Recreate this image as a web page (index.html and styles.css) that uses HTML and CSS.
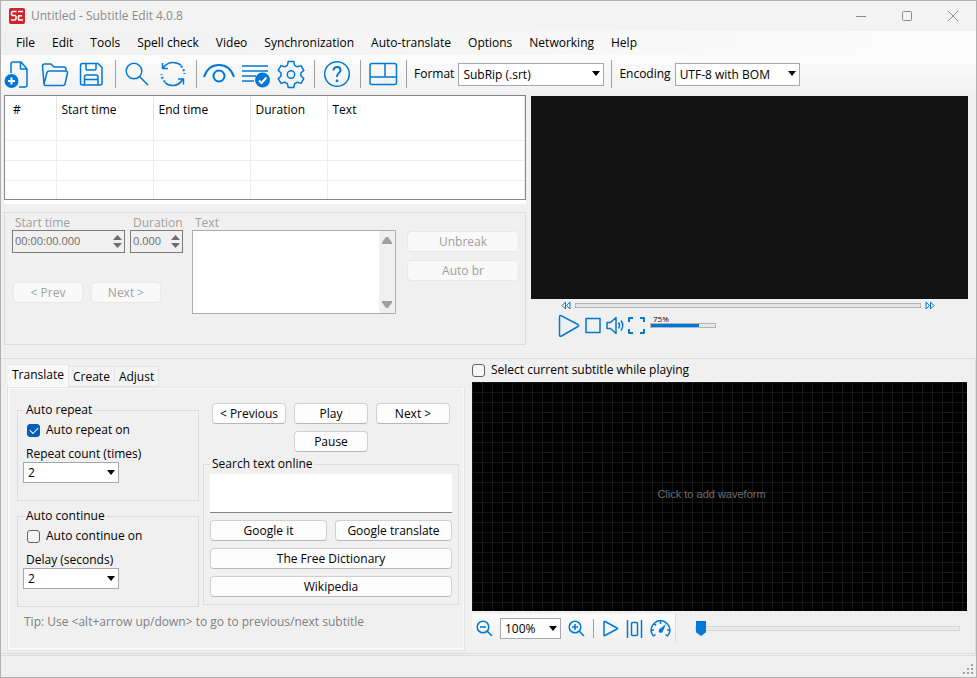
FILE: index.html
```
<!DOCTYPE html>
<html lang="en">
<head>
    <meta charset="utf-8">
    <title>Untitled - Subtitle Edit 4.0.8</title>
    <link rel="stylesheet" href="styles.css">
</head>
<body>
    <header class="titlebar">
        <svg class="logo" width="16" height="16" viewBox="0 0 16 16">
            <rect width="16" height="16" rx="2" fill="#d3222a"/>
            <path d="M7.5 3.5H3.5L2.5 4.5V6.5L3.5 7.5H6L7 8.5V11L6 12H2M9 3.5H14M9 7.8H13M9 12H14M9.5 8V12" fill="none" stroke="#fff" stroke-width="1.6"/>
        </svg>
        <h1 class="title">Untitled - Subtitle Edit 4.0.8</h1>
        <div class="window-buttons">
            <button aria-label="Minimize"><svg width="12" height="12"><path d="M1 6.5h10"/></svg></button>
            <button aria-label="Maximize"><svg width="12" height="12"><rect x="1.5" y="1.5" width="9" height="9" rx="1"/></svg></button>
            <button aria-label="Close"><svg width="12" height="12"><path d="M1 1l10 10M11 1L1 11"/></svg></button>
        </div>
    </header>

    <nav class="menu">
        <a href="#">File</a>
        <a href="#">Edit</a>
        <a href="#">Tools</a>
        <a href="#">Spell check</a>
        <a href="#">Video</a>
        <a href="#">Synchronization</a>
        <a href="#">Auto-translate</a>
        <a href="#">Options</a>
        <a href="#">Networking</a>
        <a href="#">Help</a>
    </nav>

    <div class="toolbar">
        <button class="tool" aria-label="New">
            <svg class="icon" width="31" height="30"><path d="M7 14V5q0-2 2-2h8l6 7v16q0 2-2 2h-6M16.500 3.500V10H23"/><circle class="fill" cx="7.500" cy="22" r="7"/><path class="white" d="M7.500 18.500v7M4 22h7"/></svg>
        </button>
        <button class="tool" aria-label="Open">
            <svg class="icon" width="31" height="30"><path d="M3 25L1.500 7q0-2 2-2H10l3 3h10q2 0 2 2v2M3 25L6 13.500q.5-1.500 2-1.500h16.500q2 0 2 2L24 25q-.3 1.500-2 1.500H4.500Q3 26.500 3 25z"/></svg>
        </button>
        <button class="tool" aria-label="Save">
            <svg class="icon" width="31" height="30"><path d="M4.500 4.500H20l4 4V24q0 2-2 2H4.500q-2 0-2-2V6.500q0-2 2-2zM8 4.500V10q0 1 1 1h8q1 0 1-1V4.500M6.500 26v-8q0-2 2-2H18q2 0 2 2v8M6.500 20.500H20"/></svg>
        </button>
        <span class="separator"></span>
        <button class="tool" aria-label="Find">
            <svg class="icon" width="31" height="30"><circle cx="12" cy="12" r="7.800"/><path d="M17.500 17.500L26 26"/></svg>
        </button>
        <button class="tool" aria-label="Replace">
            <svg class="icon" width="31" height="30"><path d="M4 9Q8 3.500 14 3.500q5 0 8 3M24 20q-4 6.500-10 6.500-5 0-8-3M3.500 4v5.500H9M24.500 25.500V20H19"/><path class="dots" d="M22 7q3 3 3.500 8M6 23q-3-3-3.500-8"/></svg>
        </button>
        <span class="separator"></span>
        <button class="tool" aria-label="Visual sync">
            <svg class="icon thick" width="31" height="30"><path d="M1 18Q5 6 16 6t15 12"/><circle cx="16" cy="17" r="5.500"/></svg>
        </button>
        <button class="tool" aria-label="Fix common errors">
            <svg class="icon" width="31" height="30"><path d="M2 7h26M2 12h26M2 17h14M2 22h12"/><circle class="fill" cx="22.500" cy="21" r="7.500"/><path class="white" d="M19 21.500l2.500 2.500 5-5.500"/></svg>
        </button>
        <button class="tool" aria-label="Settings">
            <svg class="icon" width="31" height="30"><path d="M11.200 2.500h5.600l.8 3.800 2.700 1.500 3.700-1.200 2.800 4.800-2.900 2.600v3l2.900 2.600-2.800 4.800-3.700-1.200-2.700 1.500-.8 3.800h-5.600l-.8-3.800-2.700-1.500L4 24.400l-2.800-4.800L4.100 17v-3l-2.900-2.600L4 6.600l3.700 1.200 2.700-1.500z"/><circle cx="14" cy="15.500" r="3.700"/></svg>
        </button>
        <span class="separator"></span>
        <button class="tool wide" aria-label="Help">
            <svg class="icon" width="31" height="30"><circle cx="15" cy="15" r="12.300"/><path class="thick" d="M11.500 11.500q0-3.500 3.500-3.500t3.500 3q0 2-1.800 3.200Q15 15.500 15 18"/><circle class="fill" cx="15" cy="21.800" r="1.400"/></svg>
        </button>
        <span class="separator"></span>
        <button class="tool wide" aria-label="Choose layout">
            <svg class="icon" width="31" height="30"><rect x="2" y="4.500" width="26.500" height="21" rx="2"/><path d="M2 18h26.500M17 4.500V18"/></svg>
        </button>
        <span class="separator"></span>
        <label class="tool-label" for="format">Format</label>
        <span class="combo format"><select id="format"><option>SubRip (.srt)</option></select></span>
        <span class="separator"></span>
        <label class="tool-label" for="encoding">Encoding</label>
        <span class="combo encoding"><select id="encoding"><option>UTF-8 with BOM</option></select></span>
    </div>

    <main class="main">
        <div class="top">
            <section class="editor">
                <div class="list">
                    <table>
                        <thead>
                            <tr><th class="col-number">#</th><th class="col-time">Start time</th><th class="col-time">End time</th><th class="col-duration">Duration</th><th>Text</th></tr>
                        </thead>
                        <tbody>
                            <tr><td></td><td></td><td></td><td></td><td></td></tr>
                            <tr><td></td><td></td><td></td><td></td><td></td></tr>
                            <tr><td></td><td></td><td></td><td></td><td></td></tr>
                            <tr><td></td><td></td><td></td><td></td><td></td></tr>
                        </tbody>
                    </table>
                </div>
                <div class="edit-box">
                    <div class="times">
                        <div class="time">
                            <label for="start">Start time</label>
                            <div class="spinner spinner-start">
                                <input id="start" type="text" value="00:00:00.000" disabled>
                                <svg width="9" height="15"><path d="M0 6L4.500 1 9 6zM0 9l4.500 5L9 9z"/></svg>
                            </div>
                        </div>
                        <div class="time">
                            <label for="duration">Duration</label>
                            <div class="spinner spinner-duration">
                                <input id="duration" type="text" value="0.000" disabled>
                                <svg width="9" height="15"><path d="M0 6L4.500 1 9 6zM0 9l4.500 5L9 9z"/></svg>
                            </div>
                        </div>
                        <div class="step">
                            <button class="button" disabled>&lt; Prev</button>
                            <button class="button" disabled>Next &gt;</button>
                        </div>
                    </div>
                    <div class="text-area">
                        <label for="text">Text</label>
                        <div class="text-frame">
                            <textarea id="text" disabled></textarea>
                            <div class="scrollbar">
                                <svg width="10" height="7"><path d="M0 7V5.500L4 0h2l4 5.500V7z"/></svg>
                                <svg width="10" height="7"><path d="M0 0v1.500L4 7h2l4-5.500V0z"/></svg>
                            </div>
                        </div>
                    </div>
                    <div class="break">
                        <button class="button" disabled>Unbreak</button>
                        <button class="button" disabled>Auto br</button>
                    </div>
                </div>
            </section>

            <section class="player">
                <div class="video"></div>
                <div class="seek">
                    <svg class="icon" width="10" height="9"><path d="M4.500 1v7L1 4.500zM9 1v7L5.500 4.500z"/></svg>
                    <input class="bar" type="range" value="0" aria-label="Position">
                    <svg class="icon" width="10" height="9"><path d="M1 1v7l3.500-3.500zM5.500 1v7L9 4.500z"/></svg>
                </div>
                <div class="playback">
                    <button aria-label="Play"><svg class="icon" width="22" height="24"><path d="M1.500 3q0-2 2-1.200L20 10.500q1.500 1 0 2L3.500 22q-2 1-2-1z"/></svg></button>
                    <button aria-label="Stop"><svg class="icon" width="16" height="24"><rect x="1" y="4.500" width="14" height="14"/></svg></button>
                    <button aria-label="Mute"><svg class="icon" width="18" height="24"><path d="M1 8.500h3.500L10 3.500v16l-5.500-5H1zM12.500 8.500q2 3 0 6M15 6.500q3.500 5 0 10"/></svg></button>
                    <button aria-label="Full screen"><svg class="icon thick" width="16" height="24"><path d="M0 8V4h4M11 4h4v4M15 15v4h-4M4 19H0v-4"/></svg></button>
                    <div class="volume">
                        <label for="volume">75%</label>
                        <input class="bar" id="volume" type="range" value="75">
                    </div>
                </div>
            </section>
        </div>

        <div class="bottom">
            <section class="tabs">
                <div class="tab-list">
                    <button class="tab active">Translate</button>
                    <button class="tab">Create</button>
                    <button class="tab">Adjust</button>
                </div>
                <div class="tab-page">
                    <div class="columns">
                        <div class="auto">
                            <fieldset>
                                <legend>Auto repeat</legend>
                                <label class="check"><input type="checkbox" checked> Auto repeat on</label>
                                <label class="field" for="repeat">Repeat count (times)</label>
                                <span class="combo count"><select id="repeat"><option>2</option></select></span>
                            </fieldset>
                            <fieldset>
                                <legend>Auto continue</legend>
                                <label class="check"><input type="checkbox"> Auto continue on</label>
                                <label class="field" for="delay">Delay (seconds)</label>
                                <span class="combo count"><select id="delay"><option>2</option></select></span>
                            </fieldset>
                        </div>
                        <div class="actions">
                            <div class="play-buttons">
                                <button class="button">&lt; Previous</button>
                                <button class="button">Play</button>
                                <button class="button">Next &gt;</button>
                                <button class="button pause">Pause</button>
                            </div>
                            <fieldset class="search">
                                <legend>Search text online</legend>
                                <textarea aria-label="Search text online"></textarea>
                                <div class="search-buttons">
                                    <button class="button">Google it</button>
                                    <button class="button">Google translate</button>
                                    <button class="button full">The Free Dictionary</button>
                                    <button class="button full">Wikipedia</button>
                                </div>
                            </fieldset>
                        </div>
                    </div>
                    <p class="tip">Tip: Use &lt;alt+arrow up/down&gt; to go to previous/next subtitle</p>
                </div>
            </section>

            <section class="wave">
                <label class="check"><input type="checkbox"> Select current subtitle while playing</label>
                <div class="waveform">Click to add waveform</div>
                <div class="wave-controls">
                    <div class="wave-tools">
                        <button aria-label="Zoom out"><svg class="icon" width="17" height="17"><circle cx="7" cy="7" r="5.800"/><path d="M11 11l5 5M4 7h6"/></svg></button>
                        <span class="combo zoom"><select aria-label="Zoom"><option>100%</option></select></span>
                        <button aria-label="Zoom in"><svg class="icon" width="17" height="17"><circle cx="7" cy="7" r="5.800"/><path d="M11 11l5 5M4 7h6M7 4v6"/></svg></button>
                        <span class="separator"></span>
                        <button aria-label="Play"><svg class="icon" width="17" height="17"><path d="M2 2q0-1 1-.5L15 8q1 .5 0 1L3 15.500q-1 .5-1-.5z"/></svg></button>
                        <button aria-label="Center"><svg class="icon" width="17" height="18"><path d="M1.500 0v18M15.500 0v18"/><rect x="5.500" y="2.500" width="6" height="13" rx="1"/></svg></button>
                        <button aria-label="Playback rate"><svg class="icon" width="21" height="18"><path d="M3.500 16Q1 13 1 10q0-3.500 3-6.500t6.500-3Q14 .5 17 3.500t3 6.500q0 3-2.500 6M1 10h3M17 10h3M3.500 16l2-1.500M17.500 16l-2-1.500M10.500 1v3M4 3.500l2 2"/><path class="fill" d="M16 4l-3.500 8q-1.500 1.500-3 .5t-.5-3z"/></svg></button>
                    </div>
                    <input class="position" type="range" value="0" aria-label="Waveform position">
                </div>
            </section>
        </div>
    </main>

    <footer class="status">
        <svg width="11" height="11"><path d="M8 0h2v2H8zM4 4h2v2H4zM8 4h2v2H8zM0 8h2v2H0zM4 8h2v2H4zM8 8h2v2H8z"/></svg>
    </footer>
</body>
</html>
```
FILE: styles.css
```
* {
    box-sizing: border-box;
}
body {
    display: flex;
    flex-direction: column;
    min-height: 100vh;
    margin: 0;
    border: 1px solid #b0b0b0;
    background: #f0f0f0;
    color: #000;
    font-family: "Open Sans", "Noto Sans", sans-serif;
    font-size: 12px;
    line-height: 16px;
}
button, input, select, textarea {
    margin: 0;
    padding: 0;
    font: inherit;
    color: inherit;
}
button {
    border: 0;
    background: none;
}
svg {
    display: block;
    overflow: visible;
}
.icon {
    fill: none;
    stroke: #0078d7;
    stroke-width: 1.5;
    stroke-linejoin: round;
}
.icon.thick, .icon .thick {
    stroke-width: 2;
}
.icon .fill {
    fill: #0078d7;
    stroke: none;
}
.icon .white {
    stroke: #fff;
    stroke-width: 2;
}
.icon .dots {
    stroke-width: 2;
    stroke-dasharray: 2 2;
}

/* title bar and menu */
.titlebar {
    display: flex;
    align-items: center;
    height: 30px;
    padding-left: 8px;
    background: #f3f3f3;
}
.title {
    margin: 0 0 0 6px;
    color: #8c8c8c;
    font-size: 12px;
    font-weight: normal;
}
.window-buttons {
    display: flex;
    margin-left: auto;
}
.window-buttons button {
    width: 46px;
    padding: 0 17px;
}
.window-buttons svg {
    fill: none;
    stroke: #8c8c8c;
}
.menu {
    display: flex;
    align-items: center;
    gap: 1px;
    height: 24px;
    padding-left: 7px;
    background: linear-gradient(to right, #f0f0f0, #fcfcfc);
}
.menu a {
    padding: 0 8px;
    color: #000;
    text-decoration: none;
}

/* toolbar */
.toolbar {
    display: flex;
    align-items: center;
    height: 38px;
    background: linear-gradient(#fcfcfc, #f2f2f2);
}
.tool {
    width: 37px;
    padding: 0 3px;
}
.tool.wide {
    width: 39px;
    padding: 0 4px;
}
.separator {
    width: 1px;
    height: 28px;
    margin: 0 3px;
    background: #a0a0a0;
}
.tool-label {
    margin-left: 4px;
}
.combo {
    position: relative;
    display: block;
}
.combo select {
    display: block;
    width: 100%;
    height: 21px;
    padding: 1px 4px 0;
    border: 1px solid #a5a8b0;
    border-radius: 0;
    background: #fff;
    appearance: none;
}
.combo::after {
    content: "";
    position: absolute;
    top: 8px;
    right: 4px;
    border: 4px solid transparent;
    border-top: 5px solid #000;
    border-bottom: 0;
}
.toolbar .combo {
    margin-left: 4px;
}
.toolbar .combo select {
    height: 23px;
}
.format {
    width: 146px;
    margin-right: 4px;
}
.encoding {
    width: 125px;
}

/* subtitle list and edit box */
.main {
    display: flex;
    flex: 1;
    flex-direction: column;
}
.top {
    display: grid;
    grid-template-columns: 522fr 437fr;
    gap: 5px;
    padding: 2px 8px 13px 3px;
}
.list {
    height: 105px;
    border: 1px solid #828790;
    background: #fff;
    overflow: hidden;
    box-shadow: 0 4px #fff;
}
table {
    width: 100%;
    border-collapse: collapse;
    table-layout: fixed;
}
th {
    height: 24px;
    padding: 3px 0 0 5px;
    border-right: 1px solid #e5e5e5;
    font-size: 12px;
    font-weight: normal;
    text-align: left;
}
.col-number {
    width: 51px;
    padding-left: 8px;
}
.col-time {
    width: 97px;
}
.col-duration {
    width: 77px;
}
td {
    height: 20px;
    padding: 0;
    border-right: 1px solid #ededed;
    border-bottom: 1px solid #ededed;
}
.edit-box {
    display: flex;
    height: 133px;
    margin-top: 12px;
    padding: 2px 6px 0 7px;
    border: 1px solid #dcdcdc;
    color: #a0a0a0;
}
.edit-box label {
    display: block;
    padding-left: 3px;
    line-height: 15px;
}
.times {
    display: flex;
    flex-wrap: wrap;
    gap: 0 5px;
    width: 180px;
    align-content: flex-start;
}
.spinner {
    display: flex;
    align-items: center;
    justify-content: space-between;
    height: 23px;
    padding: 0 2px;
    border: 1px solid #7a7a7a;
    color: #6d6d6d;
}
.spinner-start {
    width: 113px;
}
.spinner-duration {
    width: 53px;
}
.spinner input {
    width: 80%;
    min-width: 0;
    padding-bottom: 2px;
    border: 0;
    background: none;
    color: #6d6d6d;
    font-size: 11px;
}
.spinner svg {
    flex: none;
    fill: #6d6d6d;
}
.step {
    display: flex;
    gap: 8px;
    margin: 29px 0 0 1px;
}
.step .button {
    width: 70px;
}
.button {
    height: 21px;
    border: 1px solid #d0d0d0;
    border-bottom-color: #b8b8b8;
    border-radius: 4px;
    background: #fdfdfd;
}
.button:disabled {
    border-color: #e8e8e8;
    background: #f9f9f9;
    color: #a0a0a0;
}
.text-area {
    width: 204px;
}
.text-frame {
    display: flex;
    height: 84px;
    border: 1px solid #adadad;
    background: #fff;
}
textarea {
    display: block;
    flex: 1;
    min-width: 0;
    border: 0;
    background: #fff;
    resize: none;
}
.scrollbar {
    display: flex;
    flex-direction: column;
    justify-content: space-between;
    width: 16px;
    padding: 6px 3px 5px;
    background: #f0f0f0;
    fill: #a0a0a0;
}
.break {
    display: flex;
    flex: 1;
    flex-direction: column;
    gap: 8px;
    margin: 16px 0 0 11px;
}

/* video player */
.player {
    display: flex;
    flex-direction: column;
    padding-top: 1px;
}
.video {
    flex: 1;
    background: #121212;
}
.bar {
    flex: 1;
    min-width: 0;
    height: 5px;
    border: 1px solid #b4b4b4;
    background: #e6e6e6;
    appearance: none;
}
.bar::-webkit-slider-thumb {
    width: 0;
    appearance: none;
}
.seek {
    display: flex;
    align-items: center;
    gap: 4px;
    height: 13px;
    padding: 0 33px 0 30px;
}
.seek .icon {
    stroke-width: 1;
}
.playback {
    display: flex;
    align-items: center;
    gap: 5px;
    height: 27px;
    margin-bottom: 6px;
    padding-left: 27px;
}
.volume {
    align-self: flex-start;
    width: 66px;
    margin-top: 2px;
}
.volume label {
    display: block;
    padding-left: 3px;
    font-size: 8px;
    line-height: 9px;
}
.volume .bar {
    display: block;
    width: 100%;
    background: linear-gradient(to right, #0078d7 75%, #e6e6e6 75%);
}

/* translate tab */
.bottom {
    display: flex;
    flex: 1;
    gap: 7px;
    padding: 3px 8px 2px 6px;
    border: 1px solid #dcdcdc;
    border-left: 0;
}
.tabs {
    display: flex;
    flex-direction: column;
    width: 458px;
}
.tab-list {
    display: flex;
    align-items: flex-end;
    height: 25px;
    padding: 0 1px;
}
.tab {
    height: 21px;
    padding: 0 4px;
    border: 1px solid #e5e5e5;
    border-left: 0;
    background: #f3f3f3;
}
.tab.active {
    height: 23px;
    padding-bottom: 3px;
    border-bottom: 0;
    background: #f9f9f9;
}
.tab-page {
    flex: 1;
    padding: 14px 5px 0 9px;
    border: 1px solid #e5e5e5;
    box-shadow: inset 2px 1px #f9f9f9, inset -1px -2px #f9f9f9;
}
.columns {
    display: flex;
    gap: 4px;
}
.auto {
    display: flex;
    flex-direction: column;
    gap: 7px;
    width: 182px;
}
fieldset {
    min-width: 0;
    margin: 0;
    padding: 4px 5px 17px;
    border: 1px solid #dcdcdc;
}
legend {
    margin-left: 1px;
    padding: 0 2px;
}
.check {
    display: flex;
    align-items: center;
    gap: 6px;
}
fieldset .check {
    padding-left: 4px;
}
.check input {
    width: 13px;
    height: 13px;
    border: 1px solid #626262;
    border-radius: 3px;
    background: #f6f6f6;
    appearance: none;
}
.check input:checked {
    border-color: #005fb8;
    background: #005fb8;
}
.check input:checked::before {
    content: "";
    display: block;
    width: 7px;
    height: 4px;
    margin: 2px;
    border: solid #fff;
    border-width: 0 0 1px 1px;
    transform: rotate(-45deg);
}
.field {
    display: block;
    margin-top: 8px;
    padding-left: 3px;
}
.count {
    width: 96px;
}
.actions {
    flex: 1;
    padding-top: 1px;
}
.play-buttons {
    display: grid;
    grid-template-columns: repeat(3, 74px);
    gap: 7px 8px;
    margin-bottom: 4px;
    padding-left: 9px;
}
.pause {
    grid-column: 2;
}
.search {
    padding: 2px 6px 7px;
}
.search legend {
    margin-left: 0;
}
.search textarea {
    width: 100%;
    height: 39px;
    border-bottom: 1px solid #868686;
}
.search-buttons {
    display: grid;
    grid-template-columns: 1fr 1fr;
    gap: 7px 8px;
    margin-top: 7px;
}
.full {
    grid-column: 1 / 3;
}
.tip {
    margin: 7px 0 0 7px;
    color: #808080;
}

/* waveform */
.wave {
    display: flex;
    flex: 1;
    flex-direction: column;
}
.waveform {
    display: flex;
    flex: 1;
    align-items: center;
    justify-content: center;
    margin-top: 4px;
    padding: 0 16px 6px 0;
    background-color: #000;
    background-image: linear-gradient(#181818 1px, transparent 1px), linear-gradient(to right, #181818 1px, transparent 1px);
    background-size: 10px 10px;
    color: #6e6e6e;
    font-family: "Liberation Sans", sans-serif;
    font-size: 11px;
}
.wave-controls {
    display: flex;
    align-items: center;
    margin: 3px 0 8px;
}
.wave-tools {
    display: flex;
    align-items: center;
    gap: 7px;
    height: 29px;
    padding: 0 4px;
    border-right: 1px solid #dcdcdc;
    background: linear-gradient(#fcfcfc, #f0f0f0);
}
.wave-tools .separator {
    height: 19px;
    margin: 0 1px;
}
.zoom {
    width: 61px;
}
.position {
    flex: 1;
    min-width: 0;
    height: 5px;
    margin: 0 7px 0 19px;
    border: 1px solid #d6d6d6;
    background: #e9e9e9;
    appearance: none;
}
.position::-webkit-slider-thumb {
    width: 10px;
    height: 15px;
    background: #0078d7;
    clip-path: polygon(0 0, 100% 0, 100% 75%, 50% 100%, 0 75%);
    appearance: none;
}
.status {
    display: flex;
    align-items: flex-end;
    justify-content: flex-end;
    height: 22px;
    margin-top: 1px;
    padding: 2px;
    border-top: 1px solid #dcdcdc;
    fill: #a0a0a0;
}
```
